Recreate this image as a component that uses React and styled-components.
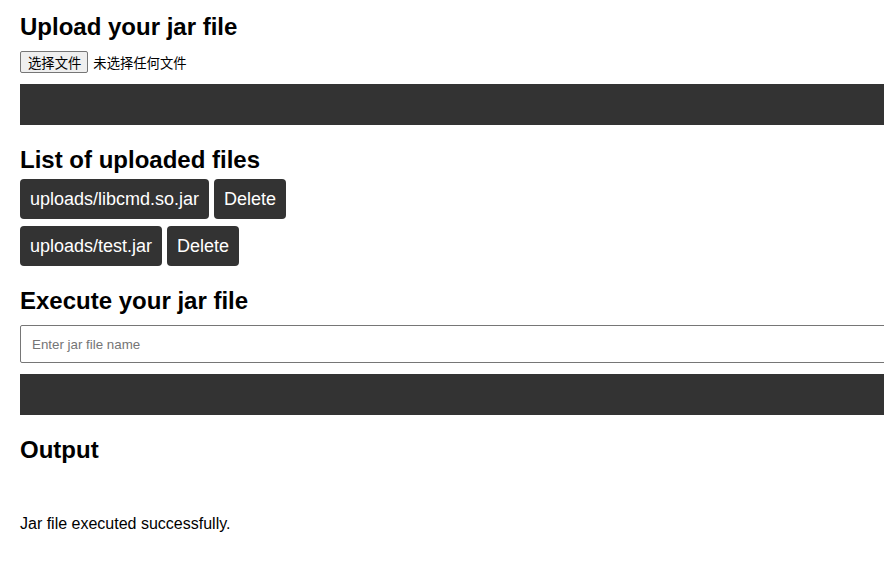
import React, { useState } from 'react';
import styled, { createGlobalStyle } from 'styled-components';

const GlobalStyle = createGlobalStyle`
  html, body {
    margin: 0;
    padding: 0;
    background: #fff;
    overflow-x: hidden;
  }
  body {
    font-family: "Liberation Sans", Arial, sans-serif;
    color: #000;
  }
`;

const Page = styled.main`
  padding: 13px 0 40px 20px;
`;

const Heading = styled.h2`
  margin: ${p => p.$top ?? 21}px 0 0;
  font-size: 24px;
  line-height: 28px;
  font-weight: bold;
`;

const FileRow = styled.label`
  display: flex;
  align-items: center;
  gap: 5px;
  margin-top: 10px;
  height: 22px;
  font-family: "Liberation Sans", "Noto Sans CJK SC", sans-serif;
  font-size: 13.33px;
  cursor: pointer;

  input {
    display: none;
  }
`;

const PickButton = styled.span`
  box-sizing: border-box;
  height: 22px;
  padding: 0 6px 0 7px;
  display: inline-flex;
  align-items: center;
  background: #efefef;
  border: 1px solid #767676;
  border-radius: 2px;
  color: #000;
`;

const Bar = styled.button`
  display: block;
  width: 100%;
  height: 41px;
  margin-top: 11px;
  border: none;
  border-radius: 0;
  background: #333;
  cursor: pointer;
`;

const FileList = styled.div`
  display: flex;
  flex-direction: column;
  gap: 7px;
  margin-top: 5px;
`;

const FileItem = styled.div`
  display: flex;
  gap: 5px;
`;

const DarkButton = styled.button`
  height: 40px;
  padding: 0 10px;
  border: none;
  border-radius: 4px;
  background: #333;
  color: #fff;
  font-family: "Liberation Sans", Arial, sans-serif;
  font-size: 18px;
  line-height: 20px;
  cursor: pointer;
`;

const JarInput = styled.input`
  display: block;
  box-sizing: border-box;
  width: calc(100% + 10px);
  height: 38px;
  margin-top: 10px;
  padding: 0 11px;
  border: 1px solid #767676;
  border-radius: 2px 0 0 2px;
  font-family: "Liberation Sans", Arial, sans-serif;
  font-size: 13.33px;
  outline: none;

  &::placeholder {
    color: #757575;
  }
`;

const Result = styled.p`
  margin: 51px 0 0;
  font-size: 16px;
  line-height: 18px;
`;

const files = ['uploads/libcmd.so.jar', 'uploads/test.jar'];

export default function App() {
  const [jar, setJar] = useState('');

  return (
    <>
      <GlobalStyle />
      <Page>
        <Heading $top={0}>Upload your jar file</Heading>
        <FileRow>
          <input type="file" accept=".jar" />
          <PickButton>选择文件</PickButton>
          <span>未选择任何文件</span>
        </FileRow>
        <Bar aria-label="Upload" />

        <Heading>List of uploaded files</Heading>
        <FileList>
          {files.map(f => (
            <FileItem key={f}>
              <DarkButton>{f}</DarkButton>
              <DarkButton>Delete</DarkButton>
            </FileItem>
          ))}
        </FileList>

        <Heading>Execute your jar file</Heading>
        <JarInput
          placeholder="Enter jar file name"
          value={jar}
          onChange={e => setJar(e.target.value)}
        />
        <Bar aria-label="Execute" />

        <Heading>Output</Heading>
        <Result>Jar file executed successfully.</Result>
      </Page>
    </>
  );
}
